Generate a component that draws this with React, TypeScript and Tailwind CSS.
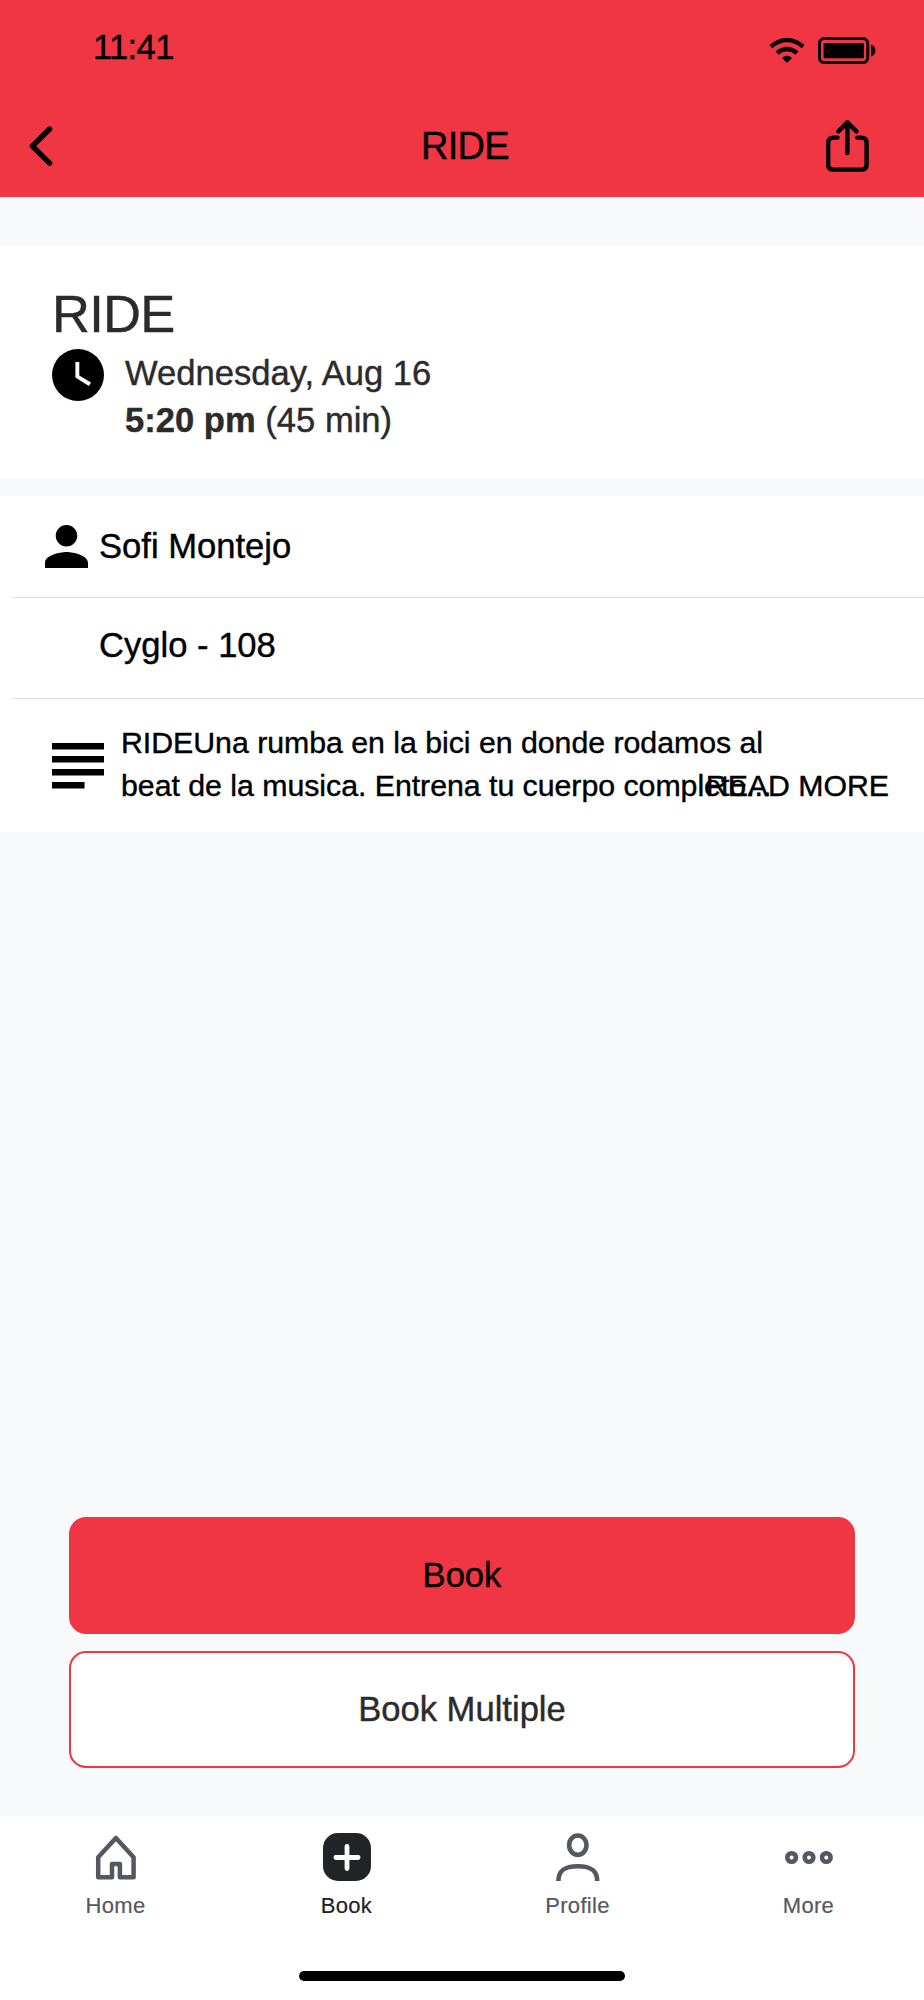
import React, { useState } from "react";

const WifiIcon = () => (
  <svg width="36" height="26" viewBox="0 0 36 26" fill="none" stroke="#000" strokeWidth="4.4">
    <path d="M1.8 8.6 Q18 -4.4 34.2 8.6" />
    <path d="M8 15 Q18 7 28 15" />
    <path d="M18 25 L13 20 Q18 15.4 23 20 Z" fill="#000" stroke="none" />
  </svg>
);

const BatteryIcon = () => (
  <svg width="58" height="28" viewBox="0 0 58 28">
    <rect x="1.4" y="1.6" width="48.4" height="24" rx="5" fill="none" stroke="#000" strokeWidth="3" />
    <rect x="5.6" y="5.9" width="40.2" height="15.4" rx="1" />
    <path d="M53 7.6 Q57.4 9 57.4 13.6 Q57.4 18.2 53 19.6 Z" />
  </svg>
);

const BackIcon = () => (
  <svg width="24" height="40" viewBox="0 0 24 40" fill="none" stroke="#000" strokeWidth="5.4" strokeLinecap="round" strokeLinejoin="round">
    <path d="M20.6 3 L3.4 20.2 L20.6 37.2" />
  </svg>
);

const ShareIcon = () => (
  <svg width="44" height="53" viewBox="0 0 44 53" fill="none" stroke="#000" strokeWidth="4.4" strokeLinecap="round" strokeLinejoin="round">
    <path d="M12.5 17.6 H8.5 Q3.2 17.6 3.2 22.9 V44.4 Q3.2 49.6 8.5 49.6 H36.3 Q41.6 49.6 41.6 44.4 V22.9 Q41.6 17.6 36.3 17.6 H32.3" />
    <path d="M22.4 33 V2.8 M13.4 11.4 L22.4 2.4 L31.4 11.4" />
  </svg>
);

const ClockIcon = () => (
  <svg width="52" height="52" viewBox="2 2 20 20">
    <circle cx="12" cy="12" r="10" />
    <path d="M16.2 16.2 L11 13 V7 H12.5 V12.2 L17 14.9 Z" fill="#fff" />
  </svg>
);

const PersonIcon = () => (
  <svg width="43" height="43" viewBox="4 4 16 16">
    <path d="M12 12c2.21 0 4-1.79 4-4s-1.79-4-4-4-4 1.79-4 4 1.79 4 4 4zm0 2c-2.67 0-8 1.34-8 4v2h16v-2c0-2.66-5.33-4-8-4z" />
  </svg>
);

const NotesIcon = () => (
  <svg width="52" height="46" viewBox="0 0 52 46">
    <path d="M0 0H52V6.4H0Z M0 13H52V19.4H0Z M0 26H52V32.4H0Z M0 39H32.5V45.4H0Z" />
  </svg>
);

const HomeIcon = () => (
  <svg width="48" height="48" viewBox="0 0 48 48" fill="none" stroke="currentColor" strokeWidth="4.5" strokeLinejoin="round">
    <path d="M23.9 5 L6.2 24.2 V44.2 H20 V31 H27.9 V44.2 H41.6 V24.2 Z" />
  </svg>
);

const BookIcon = () => (
  <svg width="48" height="48" viewBox="0 0 48 48">
    <rect width="48" height="48" rx="15" fill="#222326" />
    <path d="M24 13.4 V35.6 M12.9 24.5 H35.1" stroke="#fff" strokeWidth="4.8" strokeLinecap="round" />
  </svg>
);

const ProfileIcon = () => (
  <svg width="48" height="48" viewBox="0 0 48 48" fill="none" stroke="currentColor" strokeWidth="4.6">
    <rect x="15.2" y="2.5" width="17.2" height="19.4" rx="8.6" ry="9.3" />
    <path d="M4.4 48 C4.4 37.5 10.2 33.2 23.8 33.2 C37.4 33.2 43.2 37.5 43.2 48" />
  </svg>
);

const MoreIcon = () => (
  <svg width="48" height="48" viewBox="0 0 48 48" fill="none" stroke="currentColor" strokeWidth="4.6">
    <circle cx="6.6" cy="24.5" r="4.3" />
    <circle cx="24" cy="24.5" r="4.3" />
    <circle cx="41.3" cy="24.5" r="4.3" />
  </svg>
);

const tabs = [
  { name: "Home", icon: <HomeIcon /> },
  { name: "Book", icon: <BookIcon /> },
  { name: "Profile", icon: <ProfileIcon /> },
  { name: "More", icon: <MoreIcon /> },
];

const App: React.FC = () => {
  const [selectedTab, setSelectedTab] = useState<string>("Book");

  return (
    <div className="w-[924px] h-[2000px] flex flex-col bg-[#f8f9fb] text-black font-['Liberation_Sans',Arial,sans-serif] [-webkit-text-stroke:0.4px] whitespace-nowrap overflow-hidden">
      <header className="h-[197px] shrink-0 bg-[#f03543]">
        <div className="h-[95px] flex items-center justify-between pl-[93px] pr-[48px]">
          <span className="text-[34.5px] pt-px tracking-[-0.6px]">11:41</span>
          <div className="flex items-center gap-[13px] pt-[6px]">
            <WifiIcon />
            <BatteryIcon />
          </div>
        </div>
        <div className="h-[102px] grid grid-cols-[1fr_auto_1fr] items-center pl-[29px] pr-[55px]">
          <button className="justify-self-start">
            <BackIcon />
          </button>
          <h1 className="pl-[32px] text-[38px] tracking-[-0.7px]">RIDE</h1>
          <button className="justify-self-end">
            <ShareIcon />
          </button>
        </div>
      </header>

      <section className="mt-[49px] h-[233px] shrink-0 bg-white pl-[52px] pt-[37px]">
        <h2 className="text-[52.5px] leading-[62px] tracking-[-0.7px] text-[#2b2b2b]">RIDE</h2>
        <div className="flex gap-[21px] pt-[4px]">
          <ClockIcon />
          <div className="pt-px text-[34.6px] leading-[47px] text-[#2b2b2b]">
            <p>Wednesday, Aug 16</p>
            <p>
              <b>5:20 pm</b> (45 min)
            </p>
          </div>
        </div>
      </section>

      <section className="mt-[17px] h-[336px] shrink-0 bg-white">
        <div className="ml-[12px] h-[102px] flex items-center gap-[11px] pl-[33px] border-b border-[#dcdee6]">
          <PersonIcon />
          <span className="text-[34.6px]">Sofi Montejo</span>
        </div>
        <div className="ml-[12px] h-[101px] flex items-center pl-[87px] pb-[5px] border-b border-[#dcdee6]">
          <span className="text-[34.6px]">Cyglo - 108</span>
        </div>
        <div className="relative h-[133px] flex items-start gap-[17px] pl-[52px] pt-[22px] text-[30.3px] leading-[43.3px] tracking-[-0.03px]">
          <div className="pt-[22px]">
            <NotesIcon />
          </div>
          <p>
            RIDEUna rumba en la bici en donde rodamos al
            <br />
            beat de la musica. Entrena tu cuerpo completo...
          </p>
          <button className="absolute right-[35px] top-[65px]">READ MORE</button>
        </div>
      </section>

      <div className="mt-auto flex flex-col gap-[17px] px-[69px] pb-[48px]">
        <button className="h-[117px] rounded-[17px] bg-[#f03543] text-[34.6px]">Book</button>
        <button className="h-[117px] rounded-[17px] border-2 border-[#f03543] bg-white text-[34.6px] text-[#2b2b2b]">
          Book Multiple
        </button>
      </div>

      <footer className="h-[184px] shrink-0 flex flex-col items-center justify-between bg-white pt-[17px] pb-[19px]">
        <nav className="w-full grid grid-cols-4">
          {tabs.map((tab) => (
            <button
              key={tab.name}
              className={`flex flex-col items-center gap-[12px] ${
                selectedTab === tab.name ? "text-[#222326]" : "text-[#555761]"
              }`}
              onClick={() => setSelectedTab(tab.name)}
              aria-current={selectedTab === tab.name ? "page" : undefined}
            >
              {tab.icon}
              <span className="text-[22px] leading-[26px] tracking-[0.3px] [-webkit-text-stroke:0.2px]">{tab.name}</span>
            </button>
          ))}
        </nav>
        <div className="h-[10px] w-[326px] rounded-full bg-black"></div>
      </footer>
    </div>
  );
};

export default App;
